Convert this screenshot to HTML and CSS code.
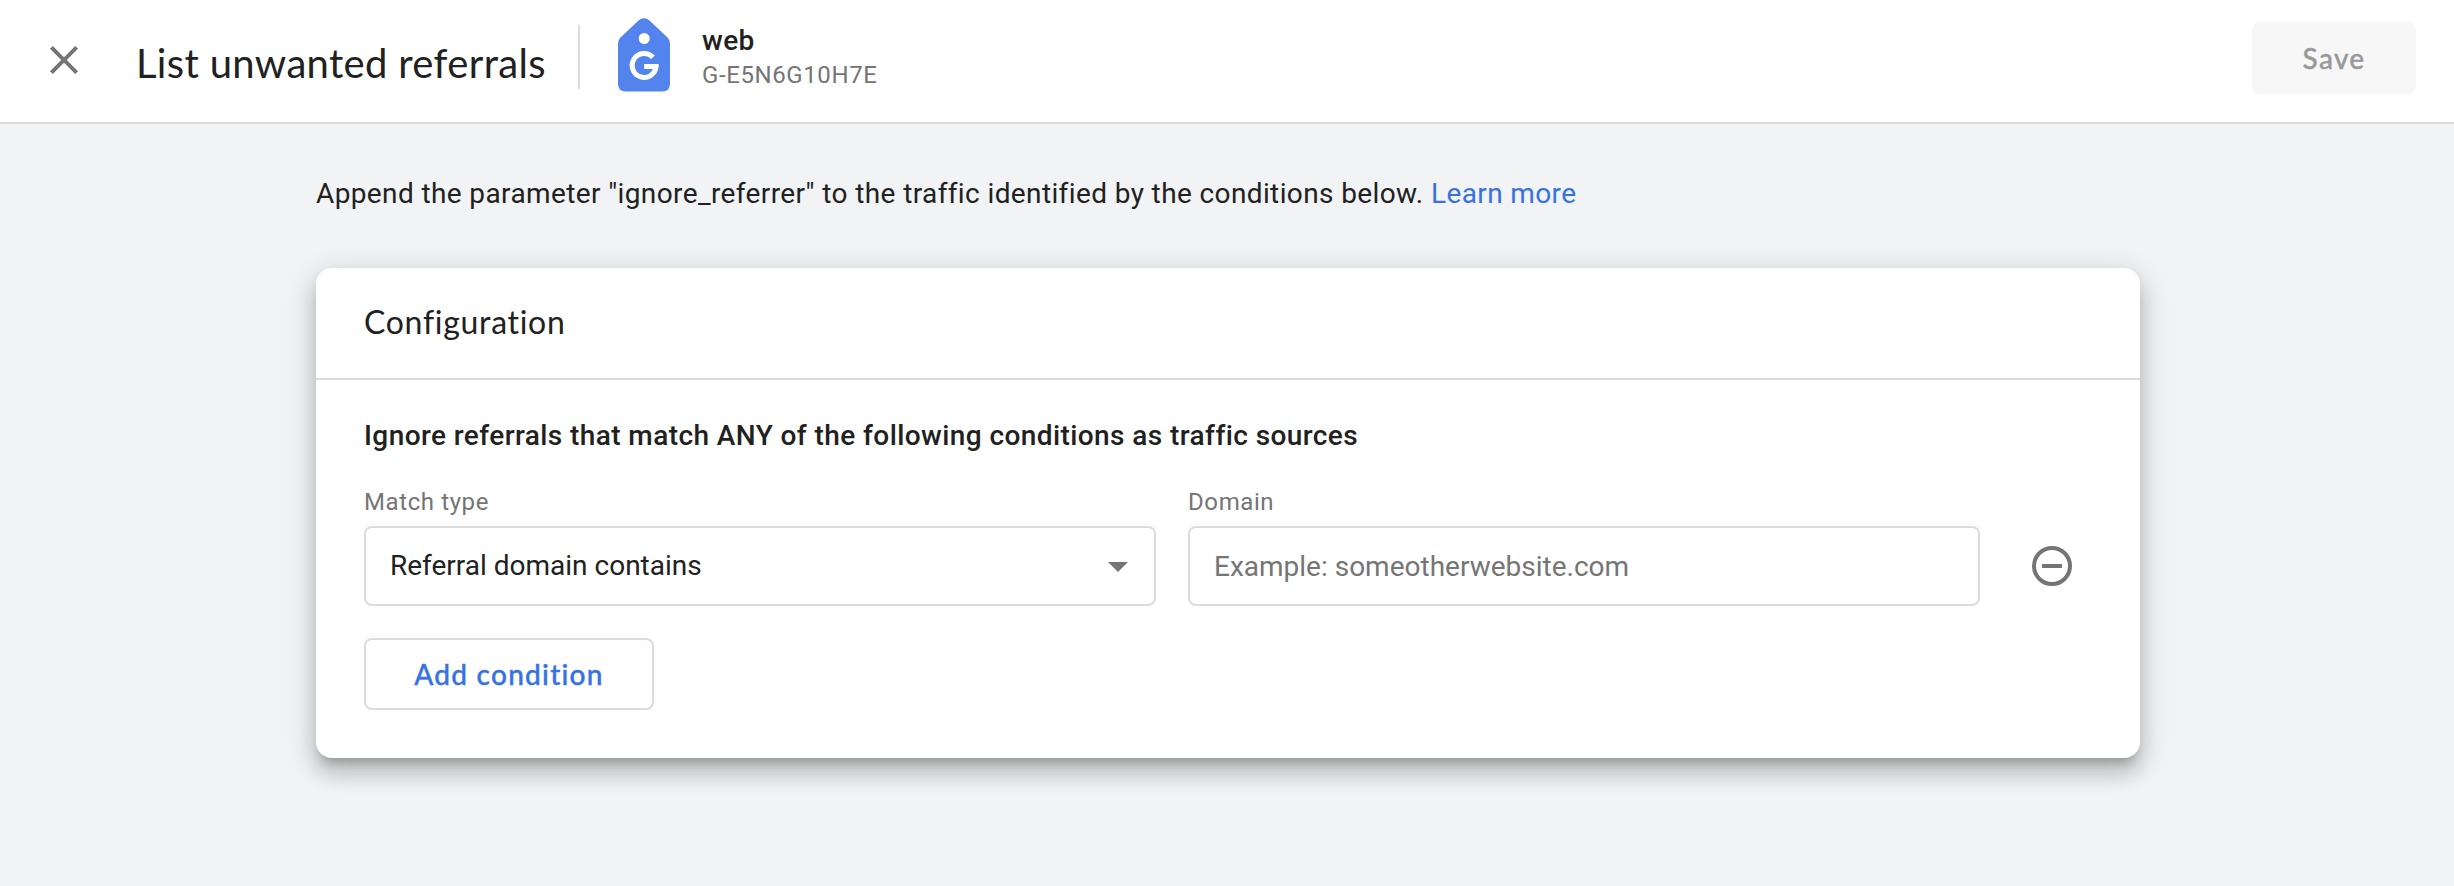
FILE: index.html
```html
<!DOCTYPE html>
<html lang="en">
<head>
<meta charset="utf-8">
<title>List unwanted referrals</title>
<link rel="stylesheet" href="styles.css">
</head>
<body>
<header class="topbar">
  <button class="icon-button close" aria-label="Close">
    <svg width="48" height="48" viewBox="0 0 24 24"><path fill="#757575" d="M19 6.41 17.59 5 12 10.59 6.41 5 5 6.41 10.59 12 5 17.59 6.41 19 12 13.41 17.59 19 19 17.59 13.41 12z"/></svg>
  </button>
  <h1 class="title">List unwanted referrals</h1>
  <div class="stream">
    <svg class="tag" width="52" height="74" viewBox="0 0 52 74">
      <path fill="#5383ec" d="M20.500 2.600Q26-2.200 31.500 2.600L49.500 19.500Q52 22 52 25.500V65.500Q52 73.500 44 73.500H8Q0 73.500 0 65.500V25.500Q0 22 2.500 19.500Z"/>
      <circle cx="26.200" cy="20.500" r="5.500" fill="#fff"/>
      <path fill="none" stroke="#fff" stroke-width="5" d="M35 39.300A12 12 0 1 0 38.100 48.600H26.200"/>
    </svg>
    <div class="stream-text">
      <div class="stream-name">web</div>
      <div class="stream-id">G-E5N6G10H7E</div>
    </div>
  </div>
  <button class="save" disabled>Save</button>
</header>
<main class="content">
  <p class="intro">Append the parameter "ignore_referrer" to the traffic identified by the conditions below. <a class="link" href="#">Learn more</a></p>
  <section class="card">
    <h2 class="card-title">Configuration</h2>
    <div class="card-body">
      <h3 class="rule">Ignore referrals that match ANY of the following conditions as traffic sources</h3>
      <div class="condition">
        <div class="field">
          <span class="label">Match type</span>
          <div class="box">
            <span class="value">Referral domain contains</span>
            <svg width="20" height="10" viewBox="0 0 20 10"><path fill="#757575" d="M0 0H20L10 10Z"/></svg>
          </div>
        </div>
        <div class="field">
          <span class="label">Domain</span>
          <div class="box">
            <span class="placeholder">Example: someotherwebsite.com</span>
          </div>
        </div>
        <button class="icon-button remove" aria-label="Remove condition">
          <svg width="48" height="48" viewBox="0 0 48 48"><circle cx="24" cy="24" r="18" fill="none" stroke="#757575" stroke-width="4"/><path fill="#757575" d="M14 22H34V26H14Z"/></svg>
        </button>
      </div>
      <button class="add">Add condition</button>
    </div>
  </section>
</main>
</body>
</html>
```
FILE: styles.css
```css
* { box-sizing: border-box; }

body {
  margin: 0;
  min-height: 886px;
  background: #f1f3f4;
  color: #212121;
  font-family: Roboto, "Liberation Sans", sans-serif;
}

button {
  border: 0;
  padding: 0;
  background: none;
}

.topbar {
  display: flex;
  align-items: flex-start;
  height: 124px;
  padding-right: 38px;
  background: #fff;
  border-bottom: 2px solid #d9dbdc;
}

.icon-button {
  width: 48px;
  height: 48px;
}

.icon-button svg { display: block; }

.close { margin: 36px 0 0 40px; }

.title {
  width: 444px;
  height: 64px;
  margin: 25px 0 0 48px;
  padding-top: 9px;
  border-right: 2px solid #dadce0;
  font: 400 40px/58px Lato, sans-serif;
  letter-spacing: 0.33px;
  white-space: nowrap;
}

.stream {
  display: flex;
  margin-left: 38px;
}

.tag { margin-top: 18px; }

.stream-text { margin: 22px 0 0 32px; }

.stream-name {
  font-size: 28px;
  font-weight: 500;
  line-height: 37px;
  letter-spacing: 0.4px;
}

.stream-id {
  color: #757575;
  font-size: 24px;
  line-height: 32px;
  letter-spacing: 0.6px;
}

.save {
  width: 164px;
  height: 72px;
  margin: 22px 0 0 auto;
  border-radius: 8px;
  background: #f7f7f7;
  color: #999;
  font: 500 28px/72px Lato, sans-serif;
  letter-spacing: 1.3px;
  -webkit-text-stroke: 0.4px currentColor;
}

.content {
  width: 1824px;
  margin-left: 316px;
  padding-top: 50px;
}

.intro {
  margin: 0 0 54px;
  font-size: 28px;
  line-height: 40px;
  letter-spacing: 0.385px;
}

.link {
  color: #3672e0;
  text-decoration: none;
}

.card {
  height: 490px;
  background: #fff;
  border-radius: 16px;
  box-shadow:
    0 10px 10px -6px rgba(0, 0, 0, .2),
    0 16px 20px 2px rgba(0, 0, 0, .14),
    0 6px 28px 4px rgba(0, 0, 0, .12);
}

.card-title {
  height: 112px;
  margin: 0;
  padding: 0 48px;
  border-bottom: 2px solid #dadce0;
  font: 400 32px/108px Lato, sans-serif;
  font-variant-ligatures: none;
  letter-spacing: 0.7px;
}

.card-body { padding: 36px 48px 48px; }

.rule {
  margin: 0;
  font-size: 28px;
  font-weight: 500;
  line-height: 40px;
  letter-spacing: 0.415px;
}

.condition {
  display: flex;
  align-items: flex-end;
  margin-top: 30px;
}

.field {
  width: 792px;
  margin-right: 32px;
}

.label {
  display: block;
  margin-bottom: 8px;
  color: #757575;
  font-size: 24px;
  line-height: 32px;
  letter-spacing: 0.6px;
}

.box {
  display: flex;
  align-items: center;
  justify-content: space-between;
  height: 80px;
  padding: 0 26px 0 24px;
  border: 2px solid #dadce0;
  border-radius: 8px;
  font-size: 28px;
  line-height: 40px;
}

.box svg { margin-top: 1px; }

.placeholder {
  margin-top: 2px;
  color: #757575;
}

.remove { margin: 0 0 16px 16px; }

.add {
  width: 290px;
  height: 72px;
  margin-top: 32px;
  border: 2px solid #dadce0;
  border-radius: 8px;
  color: #3672e0;
  font: 500 28px/68px Lato, sans-serif;
  letter-spacing: 1.25px;
  -webkit-text-stroke: 0.4px currentColor;
}
```
